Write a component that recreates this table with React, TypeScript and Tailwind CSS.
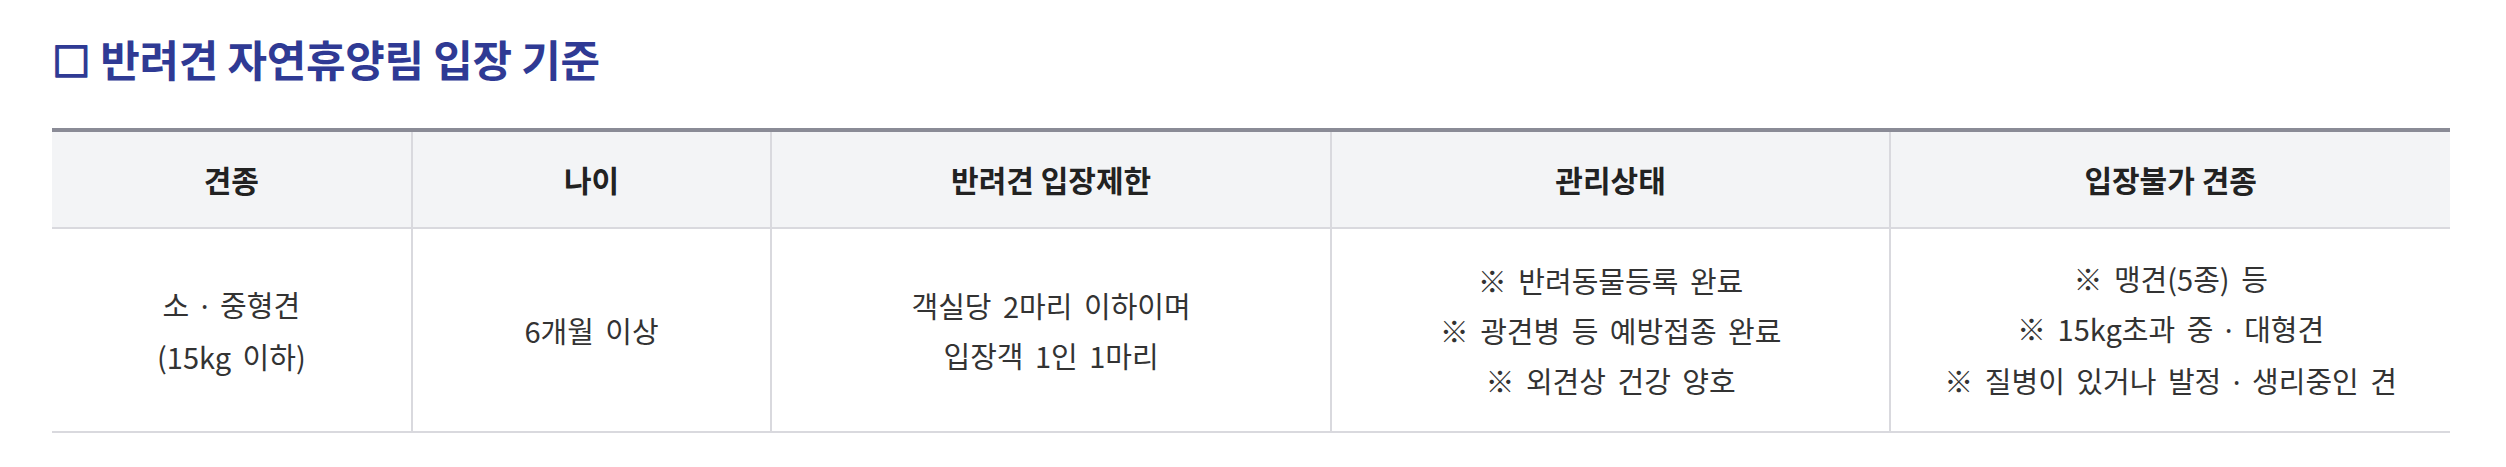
const headers = ['견종', '나이', '반려견 입장제한', '관리상태', '입장불가 견종'];

const rows: string[][] = [
  ['소 · 중형견', '(15kg 이하)'],
  ['6개월 이상'],
  ['객실당 2마리 이하이며', '입장객 1인 1마리'],
  ['※ 반려동물등록 완료', '※ 광견병 등 예방접종 완료', '※ 외견상 건강 양호'],
  ['※ 맹견(5종) 등', '※ 15kg초과 중 · 대형견', '※ 질병이 있거나 발정 · 생리중인 견'],
];

const widths = ['w-[15%]', 'w-[15%]', 'w-[23.33%]', 'w-[23.33%]', 'w-[23.34%]'];

// the middle dot is narrow in the original, so it gets a proportional font
function Line({ text }: { text: string }) {
  const parts = text.split('·');
  return (
    <div>
      {parts.map((p, i) => (
        <span key={i}>
          {i > 0 && <span className="font-['Noto_Sans',sans-serif]">·</span>}
          {p}
        </span>
      ))}
    </div>
  );
}

export default function App() {
  return (
    <div
      className="w-[2506px] h-[467px] bg-white px-[52px] pt-[28px]"
      style={{ fontFamily: '"Noto Sans CJK KR", "Noto Sans", sans-serif' }}
    >
      <h2 className="text-[43px] leading-[60px] font-bold text-[#2f3a94] tracking-[-0.3px]">
        ☐ 반려견 자연휴양림 입장 기준
      </h2>
      <table className="mt-[40px] w-[2398px] table-fixed border-collapse border-t-4 border-t-[#8a8b96]">
        <thead>
          <tr className="bg-[#f3f4f6]">
            {headers.map((h, i) => (
              <th
                key={h}
                className={`${widths[i]} h-[98px] border-b-2 border-b-[#d9d9de] ${
                  i > 0 ? 'border-l-2 border-l-[#d9d9de]' : ''
                } text-[30px] font-bold text-[#222] text-center align-middle`}
              >
                {h}
              </th>
            ))}
          </tr>
        </thead>
        <tbody>
          <tr>
            {rows.map((lines, i) => (
              <td
                key={i}
                className={`py-[24px] border-b-2 border-b-[#d9d9de] ${
                  i > 0 ? 'border-l-2 border-l-[#d9d9de]' : ''
                } text-[29px] leading-[50px] [word-spacing:5px] text-[#333] text-center align-middle`}
              >
                {lines.map((l) => (
                  <Line key={l} text={l} />
                ))}
              </td>
            ))}
          </tr>
        </tbody>
      </table>
    </div>
  );
}
